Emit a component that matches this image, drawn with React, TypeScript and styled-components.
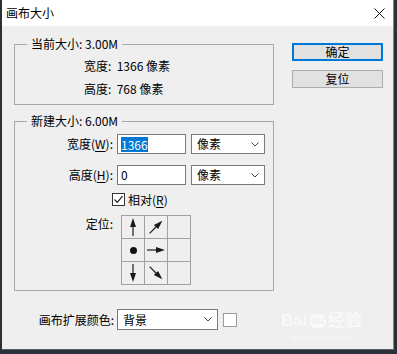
import { FC } from "react";
import styled, { createGlobalStyle } from "styled-components";

const GlobalStyle = createGlobalStyle`
  html, body {
    margin: 0;
    padding: 0;
    width: 397px;
    height: 354px;
    overflow: hidden;
    background: #2c3038;
  }
  body {
    font-family: "Noto Sans CJK SC", "Noto Sans", sans-serif;
    font-size: 12px;
    color: #000;
  }
`;

const Chevron: FC = () => (
  <svg width="8" height="5" viewBox="0 0 8 5">
    <path d="M0.5 0.5 L4 4 L7.5 0.5" fill="none" stroke="#444" strokeWidth="1" />
  </svg>
);

const Arrow: FC<{ dir: string }> = ({ dir }) => {
  const rot: Record<string, number> = { up: -90, right: 0, down: 90, ur: -45, dr: 45 };
  return (
    <svg width="22" height="22" viewBox="0 0 22 22">
      <g transform={`rotate(${rot[dir]} 11 11)`}>
        <line x1="2" y1="11" x2="12" y2="11" stroke="#1a1a1a" strokeWidth="1.2" />
        <path d="M11 8 L20 11 L11 14 Z" fill="#1a1a1a" />
      </g>
    </svg>
  );
};

const App: FC = () => {
  return (
    <>
      <GlobalStyle />
      <Dialog>
        <TitleBar>
          <Title>画布大小</Title>
          <Close>
            <svg width="11" height="11" viewBox="0 0 11 11">
              <path d="M0.5 0.5 L10.5 10.5 M10.5 0.5 L0.5 10.5" stroke="#111" strokeWidth="1" />
            </svg>
          </Close>
        </TitleBar>
        <Body>
          <LeftCol>
            <Group>
              <Legend>当前大小: 3.00M</Legend>
              <InfoRow>宽度:&nbsp; 1366 像素</InfoRow>
              <InfoRow second>高度:&nbsp; 768 像素</InfoRow>
            </Group>

            <Group second>
              <Legend>新建大小: 6.00M</Legend>
              <FieldRow>
                <FieldLabel>
                  宽度(<u>W</u>):
                </FieldLabel>
                <TextBox>
                  <Selected>1366</Selected>
                </TextBox>
                <Select>
                  像素
                  <Chevron />
                </Select>
              </FieldRow>
              <FieldRow next>
                <FieldLabel>
                  高度(<u>H</u>):
                </FieldLabel>
                <TextBox>0</TextBox>
                <Select>
                  像素
                  <Chevron />
                </Select>
              </FieldRow>
              <CheckRow>
                <CheckBox>
                  <svg width="11" height="11" viewBox="0 0 11 11">
                    <path d="M1.5 5.5 L4.3 8.3 L9.5 2.2" fill="none" stroke="#222" strokeWidth="1.2" />
                  </svg>
                </CheckBox>
                <span>
                  相对(<u>R</u>)
                </span>
              </CheckRow>
              <AnchorRow>
                <FieldLabel>定位:</FieldLabel>
                <AnchorGrid>
                  <Cell>
                    <Arrow dir="up" />
                  </Cell>
                  <Cell>
                    <Arrow dir="ur" />
                  </Cell>
                  <Cell />
                  <Cell>
                    <Dot />
                  </Cell>
                  <Cell>
                    <Arrow dir="right" />
                  </Cell>
                  <Cell />
                  <Cell>
                    <Arrow dir="down" />
                  </Cell>
                  <Cell>
                    <Arrow dir="dr" />
                  </Cell>
                  <Cell />
                </AnchorGrid>
              </AnchorRow>
            </Group>

            <ColorRow>
              <ColorLabel>画布扩展颜色:</ColorLabel>
              <Select wide>
                背景
                <Chevron />
              </Select>
              <Swatch />
            </ColorRow>
          </LeftCol>

          <RightCol>
            <Button primary>确定</Button>
            <Button>复位</Button>
          </RightCol>

          <Watermark>
            <Brand>
              Bai<Paw>du</Paw>经验
            </Brand>
            <Site>jingyan.baidu.com</Site>
          </Watermark>
        </Body>
      </Dialog>
    </>
  );
};

export default App;

const Dialog = styled.div`
  position: relative;
  margin-left: 2px;
  width: 392px;
  height: 350px;
  background: #efefef;
  border-right: 1px solid #7f8590;
  border-bottom: 1px solid #5a5f66;
  box-sizing: border-box;
  display: flex;
  flex-direction: column;
`;

const TitleBar = styled.div`
  height: 26px;
  background: #fff;
  display: flex;
  align-items: center;
  justify-content: space-between;
  padding: 0 8px 0 4px;
`;

const Title = styled.div`
  font-size: 12px;
  line-height: 16px;
`;

const Close = styled.div`
  display: flex;
  width: 11px;
  height: 11px;
  margin-top: 1px;
`;

const Body = styled.div`
  position: relative;
  flex: 1;
  display: flex;
  padding: 10px 0 0 12px;
`;

const LeftCol = styled.div`
  width: 260px;
  display: flex;
  flex-direction: column;
`;

const RightCol = styled.div`
  margin-left: 18px;
  padding-top: 7px;
  display: flex;
  flex-direction: column;
  gap: 9px;
`;

const Group = styled.fieldset<{ second?: boolean }>`
  margin: ${(p) => (p.second ? "8px" : "0")} 0 0 0;
  padding: ${(p) => (p.second ? "5px 0 5px 0" : "6px 0 7px 0")};
  border: 1px solid #a7a7a7;
  min-width: 0;
`;

const Legend = styled.legend`
  margin-left: 12px;
  padding: 0 4px;
  line-height: 16px;
  font-size: 12px;
`;

const InfoRow = styled.div<{ second?: boolean }>`
  padding-left: 69px;
  line-height: 16px;
  margin-top: ${(p) => (p.second ? "7px" : "0")};
`;

const FieldRow = styled.div<{ next?: boolean }>`
  display: grid;
  grid-template-columns: 98px 69px 74px;
  column-gap: 4px;
  align-items: center;
  margin-top: ${(p) => (p.next ? "11px" : "0")};
  height: 20px;
`;

const FieldLabel = styled.div`
  text-align: right;
  line-height: 16px;
  u {
    text-underline-offset: 2px;
  }
`;

const TextBox = styled.div`
  height: 20px;
  box-sizing: border-box;
  background: #fff;
  border: 1px solid #7a7a7a;
  padding: 0 3px;
  display: flex;
  align-items: center;
  line-height: 16px;
`;

const Selected = styled.span`
  background: #0078d7;
  color: #fff;
  line-height: 15px;
`;

const Select = styled.div<{ wide?: boolean }>`
  width: ${(p) => (p.wide ? "101px" : "74px")};
  height: ${(p) => (p.wide ? "21px" : "20px")};
  margin-left: ${(p) => (p.wide ? "0" : "1px")};
  box-sizing: border-box;
  background: #fff;
  border: 1px solid #7a7a7a;
  display: flex;
  align-items: center;
  justify-content: space-between;
  padding: 0 5px 0 5px;
  line-height: 16px;
`;

const CheckRow = styled.div`
  margin-top: 7px;
  margin-left: 97px;
  display: flex;
  align-items: center;
  gap: 3px;
  height: 15px;
  line-height: 16px;
  u {
    text-underline-offset: 2px;
  }
`;

const CheckBox = styled.div`
  width: 13px;
  height: 13px;
  box-sizing: border-box;
  border: 1px solid #333;
  background: #fff;
  display: flex;
  align-items: center;
  justify-content: center;
`;

const AnchorRow = styled.div`
  margin-top: 8px;
  display: grid;
  grid-template-columns: 98px 70px;
  column-gap: 8px;
  align-items: start;
  ${FieldLabel} {
    margin-top: 1px;
  }
`;

const AnchorGrid = styled.div`
  display: grid;
  grid-template-columns: repeat(3, 22px);
  grid-template-rows: repeat(3, 22px);
  gap: 1px;
  padding: 1px;
  background: #a0a0a0;
  width: 70px;
  box-sizing: border-box;
`;

const Cell = styled.div`
  background: #efefef;
  display: flex;
  align-items: center;
  justify-content: center;
`;

const Dot = styled.div`
  width: 7px;
  height: 7px;
  border-radius: 50%;
  background: #111;
`;

const ColorRow = styled.div`
  margin-top: 18px;
  display: flex;
  align-items: center;
`;

const ColorLabel = styled.div`
  width: 100px;
  text-align: right;
  margin-right: 3px;
  line-height: 16px;
`;

const Swatch = styled.div`
  width: 14px;
  height: 14px;
  box-sizing: border-box;
  margin-left: 5px;
  background: #fff;
  border: 1px solid #9a9a9a;
`;

const Button = styled.div<{ primary?: boolean }>`
  width: 91px;
  height: 18px;
  box-sizing: border-box;
  background: #e1e1e1;
  border: ${(p) => (p.primary ? "2px solid #0078d7" : "1px solid #adadad")};
  display: flex;
  align-items: center;
  justify-content: center;
  line-height: 16px;
`;

const Watermark = styled.div`
  position: absolute;
  left: 279px;
  top: 285px;
  display: flex;
  flex-direction: column;
  align-items: center;
  color: rgba(255, 255, 255, 0.6);
  pointer-events: none;
`;

const Brand = styled.div`
  font-family: "Liberation Sans", "Noto Sans CJK SC", sans-serif;
  font-weight: bold;
  font-size: 17px;
  line-height: 20px;
  display: flex;
  align-items: center;
`;

const Paw = styled.span`
  display: inline-block;
  margin: 0 2px;
  padding: 0 2px;
  font-size: 10px;
  line-height: 14px;
  color: #efefef;
  background: rgba(255, 255, 255, 0.6);
  border-radius: 7px;
`;

const Site = styled.div`
  font-family: "Liberation Serif", serif;
  font-size: 8px;
  line-height: 10px;
  margin-top: 2px;
`;
